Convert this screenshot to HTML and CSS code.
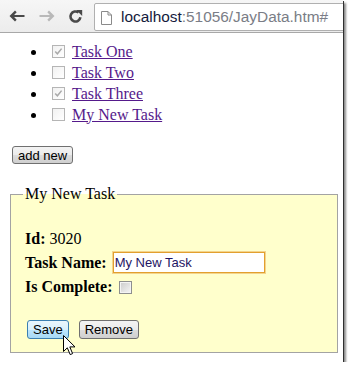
FILE: index.html
```html
<!DOCTYPE html>
<html>

<head>
    <meta charset="UTF-8">
    <title>JayData</title>
    <link rel="stylesheet" href="styles.css">
</head>

<body>
    <div class="shot">
        <div class="toolbar">
            <span class="nav back">
                <svg width="16" height="12" viewBox="0 0 16 12"><path d="M0.5 6 L6 0.6 L7.7 2.3 L5.1 5 H15.5 V7 H5.1 L7.7 9.7 L6 11.4 Z" fill="#4a4a4a"/></svg>
            </span>
            <span class="nav fwd">
                <svg width="16" height="12" viewBox="0 0 16 12"><path d="M15.5 6 L10 0.6 L8.3 2.3 L10.9 5 H0.5 V7 H10.9 L8.3 9.7 L10 11.4 Z" fill="#b9b9b9"/></svg>
            </span>
            <span class="nav reload">
                <svg width="15" height="15" viewBox="0 0 15 15"><path d="M12.4 8.3 A5 5 0 1 1 10.6 3.6" fill="none" stroke="#4a4a4a" stroke-width="2.6"/><path d="M8.2 1 H14.2 V7 Z" fill="#4a4a4a"/></svg>
            </span>
            <div class="omnibox">
                <svg class="page-icon" width="11" height="14" viewBox="0 0 11 14"><path d="M0.5 0.5 H7 L10.5 4 V13.5 H0.5 Z M7 0.5 V4 H10.5" fill="#fff" stroke="#8a8a8a"/></svg>
                <span class="url"><span class="host">localhost</span>:51056/JayData.htm#</span>
            </div>
        </div>

        <div class="page">
            <ul class="tasks">
                <li><input type="checkbox" checked disabled><a href="#">Task One</a></li>
                <li><input type="checkbox" disabled><a href="#">Task Two</a></li>
                <li><input type="checkbox" checked disabled><a href="#">Task Three</a></li>
                <li><input type="checkbox" disabled><a href="#">My New Task</a></li>
            </ul>

            <button class="btn add">add new</button>

            <fieldset class="editor">
                <legend>My New Task</legend>
                <div class="fields">
                    <div class="field-id"><b>Id:</b> 3020</div>
                    <div class="field-row name"><b>Task Name:</b><input type="text" class="name-box" value="My New Task"></div>
                    <div class="field-row done"><b>Is Complete:</b><input type="checkbox" class="done-box"></div>
                    <div class="actions">
                        <button class="btn hover">Save</button>
                        <button class="btn">Remove</button>
                    </div>
                </div>
            </fieldset>
        </div>

        <!-- mouse pointer over the Save button -->
        <svg class="cursor" width="13" height="21" viewBox="0 0 13 21"><path d="M0.5 0.5 V16.5 L4.3 12.8 L7.2 19.6 L9.6 18.6 L6.8 11.9 H12 Z" fill="#fff" stroke="#000" stroke-linejoin="round"/></svg>
    </div>
</body>
</html>
```

FILE: styles.css
```css
* {
    box-sizing: border-box;
}
body {
    margin: 0;
    background: #fff;
}
.shot {
    position: relative;
    width: 343px;
    height: 362px;
    overflow: hidden;
    background: #fff;
    font-family: "Liberation Serif", serif;
    font-size: 16px;
    color: #000;
    box-shadow: 1px 1px 0 #2f2f2f, 3px 3px 2px rgba(0, 0, 0, 0.45);
}

/* browser toolbar */
.toolbar {
    display: flex;
    align-items: flex-start;
    height: 33px;
    overflow: hidden;
    background: linear-gradient(#f6f6f6, #ececec);
    border-bottom: 1px solid #a8a8a8;
}
.nav {
    display: flex;
    align-items: center;
    height: 32px;
}
.back {
    margin-left: 9px;
}
.fwd {
    margin-left: 14px;
}
.reload {
    margin-left: 13px;
    padding-top: 1px;
}
.omnibox {
    display: flex;
    align-items: center;
    flex: none;
    width: 270px;
    height: 28px;
    margin: 3px 0 0 11px;
    padding-left: 6px;
    background: #fff;
    border: 1px solid #b0b0b0;
    border-radius: 2px;
}
.page-icon {
    margin-top: 1px;
}
.url {
    margin-left: 9px;
    font-family: "Liberation Sans", sans-serif;
    font-size: 15.4px;
    color: #7a7d86;
    white-space: nowrap;
}
.host {
    color: #141a3c;
}

/* page */
.tasks {
    list-style: none;
    margin: 8px 0 0;
    padding: 0;
}
.tasks li {
    display: flex;
    align-items: center;
    height: 21px;
}
.tasks li::before {
    content: "";
    width: 5px;
    height: 5px;
    margin: 2px 16px 0 31px;
    border-radius: 50%;
    background: #000;
}
.tasks input {
    appearance: none;
    width: 13px;
    height: 13px;
    margin: 0 7px 0 0;
    border: 1px solid #b5b5b5;
    background: linear-gradient(135deg, #f1f1f1, #fff);
}
.tasks input:checked {
    background: url("data:image/svg+xml,%3Csvg xmlns='http://www.w3.org/2000/svg' viewBox='0 0 11 11'%3E%3Cpath d='M2.2 5.4 L4.4 7.8 L8.6 2.6' fill='none' stroke='%23a9a9a9' stroke-width='1.5'/%3E%3C/svg%3E") no-repeat center / 11px 11px, linear-gradient(135deg, #f1f1f1, #fff);
}
.tasks a {
    color: #551a8b;
    line-height: 18px;
}

.btn {
    display: block;
    height: 19px;
    padding: 0 5px;
    font-family: "Liberation Sans", sans-serif;
    font-size: 13px;
    color: #000;
    border: 1px solid #707070;
    border-radius: 3px;
    background: linear-gradient(#f3f3f3, #ebebeb 50%, #dddddd 51%, #cfcfcf);
}
.btn.hover {
    border-color: #3c7fb1;
    background: linear-gradient(#eaf6fd, #d9f0fc 50%, #bee6fd 51%, #a7d9f5);
}
.add {
    height: 18px;
    margin: 21px 0 0 12px;
}

.editor {
    width: 328px;
    margin: 21px 0 0 10px;
    padding: 0 12px 13px;
    border: 1px solid #a3a3a3;
    background: #ffffcc;
}
.editor legend {
    padding: 0 2px;
    line-height: 18px;
}
.fields {
    padding: 27px 0 0 2px;
}
.field-id {
    line-height: 18px;
}
.field-row {
    display: flex;
    align-items: center;
    gap: 5px;
}
.field-row.name {
    height: 23px;
    margin-top: 3px;
}
.field-row.done {
    height: 18px;
    margin-top: 4px;
    gap: 6px;
}
.name-box {
    width: 152px;
    height: 21px;
    margin-left: 1px;
    padding: 0 1px;
    font-family: "Liberation Sans", sans-serif;
    font-size: 13px;
    color: #1e1563;
    background: #fff;
    border: 1px solid #e2a02e;
    box-shadow: 0 0 0 1px #f4d48c;
    outline: none;
}
.done-box {
    appearance: none;
    width: 13px;
    height: 13px;
    margin: 0;
    border: 1px solid #8e8f8f;
    background: linear-gradient(135deg, #cbcbcb, #f6f6f6);
    box-shadow: inset 0 0 0 1px #f4f4f4;
}
.actions {
    display: flex;
    gap: 10px;
    margin: 24px 0 0 2px;
}

.cursor {
    position: absolute;
    left: 63px;
    top: 335px;
}
```
